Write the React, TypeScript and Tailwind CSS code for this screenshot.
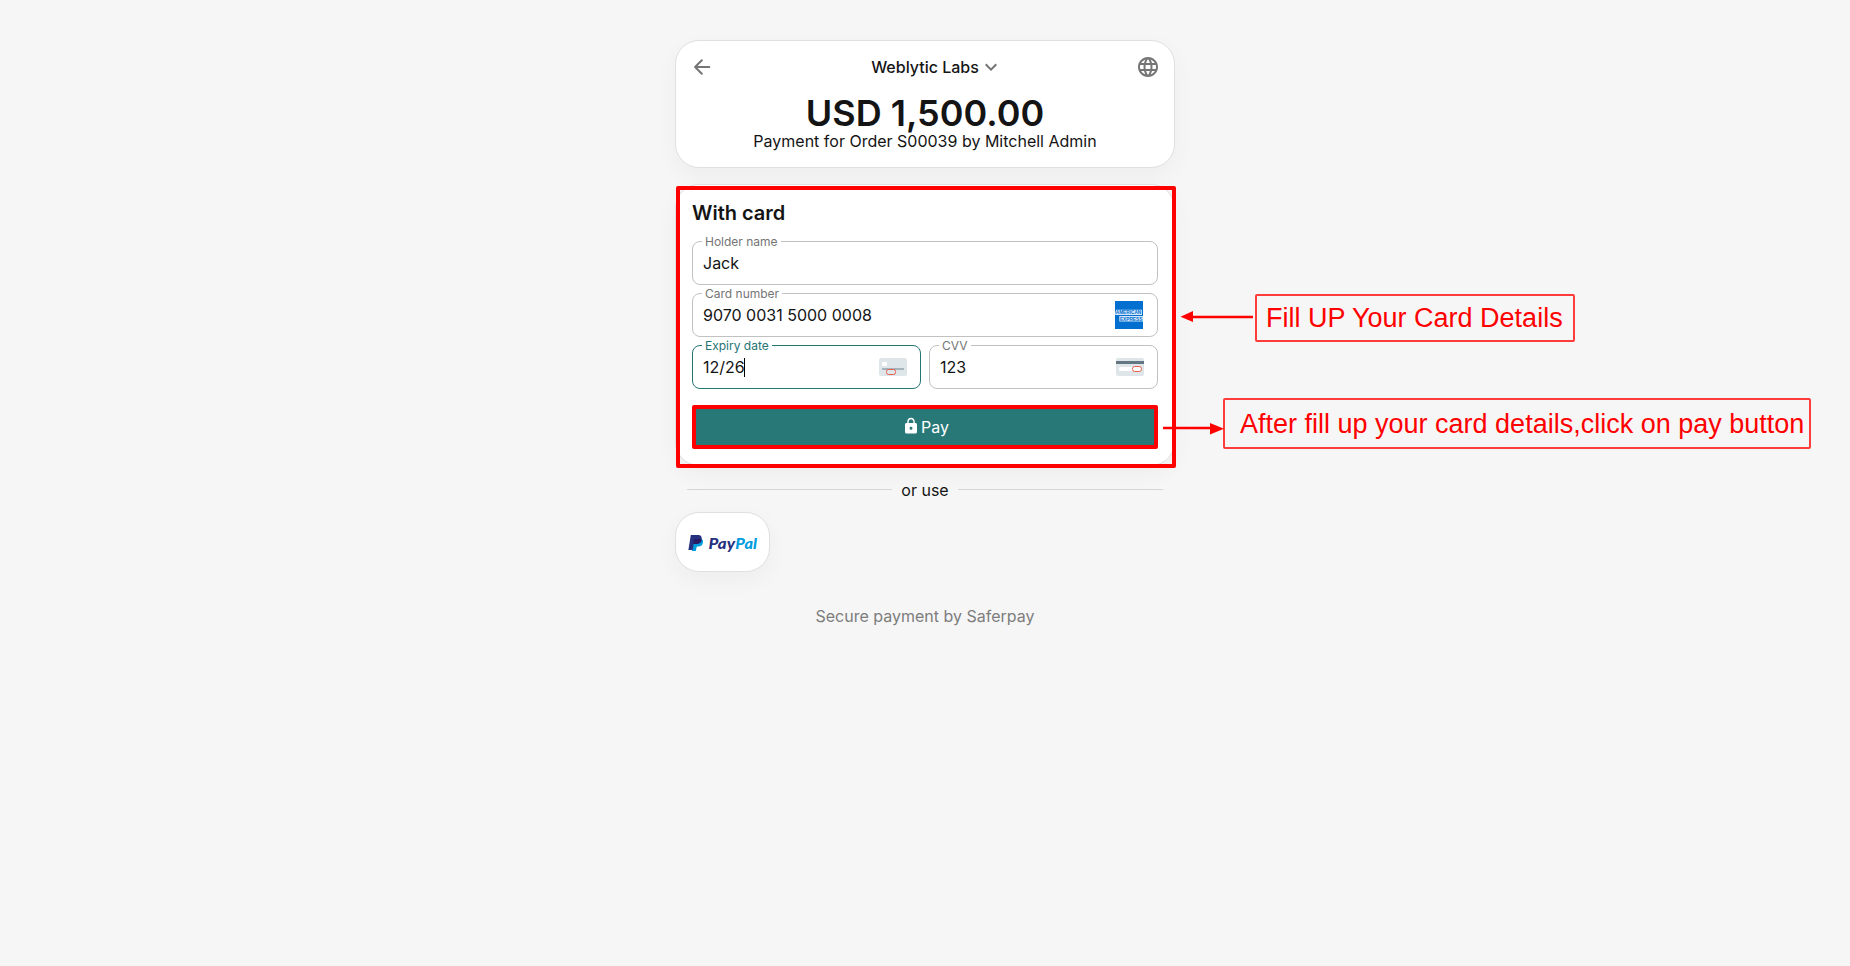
import React from "react";
import { MdKeyboardArrowDown, MdLanguage, MdLock } from "react-icons/md";

const card = "border border-[#e0e0e0] bg-white rounded-[24px] shadow-[0_8px_24px_rgba(0,0,0,0.04)]";

function Field({ label, value, active, children }: { label: string; value: string; active?: boolean; children?: React.ReactNode }) {
  return (
    <fieldset
      className={
        "h-[51px] w-full min-w-0 rounded-[8px] border px-[10px] " +
        (active ? "border-[#267575] text-[#267575]" : "border-[#c1c1c1] text-[#757575]")
      }
    >
      <legend className="-ml-px h-[14px] px-[3px] text-[12px] leading-[16px]">{label}</legend>
      <div className="flex h-[30px] items-center justify-between pr-[3px]">
        <div className="flex items-center text-[16px] leading-[20px] text-[#141414]">
          {value}
          {active && <span className="-ml-px h-[19px] w-px bg-black" />}
        </div>
        {children}
      </div>
    </fieldset>
  );
}

function Amex() {
  return (
    <svg width="28" height="28" viewBox="0 0 28 28" className="mr-px overflow-visible">
      <rect width="28" height="28" fill="#016fd0" />
      <path d="M1 8.7h26v5.4H0zM4.3 15H28v5.4H4.3z" fill="#d5e7f8" />
      <g fill="#016fd0" fontFamily="Liberation Sans" fontWeight="700" fontSize="5.4">
        <text x="0.8" y="13.4" textLength="25.4" lengthAdjust="spacingAndGlyphs">AMERICAN</text>
        <text x="4.9" y="19.7" textLength="22.4" lengthAdjust="spacingAndGlyphs">EXPRESS</text>
      </g>
    </svg>
  );
}

function ExpiryCard() {
  return (
    <svg width="28" height="18" viewBox="0 0 28 18">
      <rect width="28" height="18" rx="2" fill="#dfe6e9" />
      <rect x="3" y="4" width="5" height="4" rx="0.5" fill="#fff" />
      <rect x="3" y="10" width="22" height="2" fill="#a5b4bc" />
      <rect x="7.5" y="11.5" width="9" height="5" rx="2" fill="#dfe6e9" fillOpacity="0.4" stroke="#e8604c" />
    </svg>
  );
}

function CvvCard() {
  return (
    <svg width="28" height="18" viewBox="0 0 28 18">
      <rect width="28" height="18" rx="2" fill="#dfe6e9" />
      <rect y="3" width="28" height="3" fill="#637783" />
      <rect x="3" y="9" width="20" height="4" rx="1.5" fill="#fff" />
      <rect x="16.5" y="8.5" width="9" height="5" rx="2.3" fill="#fff" stroke="#e8604c" />
    </svg>
  );
}

function PayPal() {
  return (
    <svg width="70" height="18" viewBox="0 0 70 18" className="mt-[3px] ml-px">
      <path d="M5 4.1h8.6c1.4.7 1.7 2.1 1.3 3.8-.6 2.5-2.2 3.5-4.5 3.5H8.8L7.8 16H4z" fill="#009cde" />
      <path d="M2.8 0h7.5c2.6 0 3.9 1.7 3.3 4.2-.6 3-2.5 4.6-5.3 4.6H5.6L4.6 15H.4z" fill="#253080" />
      <path d="M6.2 4.1h7.4c.2 2.6-1.4 4.9-5.2 4.9H5.3z" fill="#281a63" />
      <g fontFamily="Lato" fontStyle="italic" fontWeight="900" fontSize="14.4">
        <text x="20.5" y="13.6" textLength="26.5" lengthAdjust="spacingAndGlyphs" fill="#253080">Pay</text>
        <text x="47.3" y="13.6" textLength="21.7" lengthAdjust="spacingAndGlyphs" fill="#009cde">Pal</text>
      </g>
    </svg>
  );
}

export default function App() {
  return (
    <div className="relative h-[966px] w-[1850px] overflow-hidden bg-[#f6f6f6] font-['Inter',sans-serif] text-[#141414]">
      <main className="mx-auto flex w-[500px] flex-col pt-10">
        <header className={card + " flex h-[128px] flex-col px-[14px] pt-[14px]"}>
          <div className="flex h-6 items-center justify-between text-[#757575]">
            <svg width="24" height="24" viewBox="0 0 24 24" fill="none" stroke="currentColor" strokeWidth="2" strokeLinecap="round" strokeLinejoin="round">
              <path d="M19.3 12H5.4M11.8 5.3L5.1 12l6.7 6.7" />
            </svg>
            <div className="flex items-center pl-[24px] text-[16px] font-medium text-[#141414]">
              Weblytic Labs
              <MdKeyboardArrowDown size={24} className="text-[#757575]" />
            </div>
            <MdLanguage size={24} />
          </div>
          <h1 className="mt-[16px] text-center text-[36px] leading-[36px] font-semibold">USD 1,500.00</h1>
          <p className="text-center text-[16px] leading-[20px]">Payment for Order S00039 by Mitchell Admin</p>
        </header>

        <section className={card + " mt-4 h-[282px] px-4 pt-[16px]"}>
          <h2 className="text-[20px] leading-6 font-semibold">With card</h2>
          <div className="mt-[9px] flex flex-col gap-px">
            <Field label="Holder name" value="Jack" />
            <Field label="Card number" value="9070 0031 5000 0008"><Amex /></Field>
            <div className="flex gap-2">
              <Field label="Expiry date" value="12/26" active><ExpiryCard /></Field>
              <Field label="CVV" value="123"><CvvCard /></Field>
            </div>
          </div>
          <button className="mt-4 flex h-[44px] w-full items-center justify-center gap-[2px] rounded-[2px] border-4 border-[#ff0000] bg-[#287878] text-[16px] text-white">
            <MdLock size={18} className="-mt-[3px] -mr-px ml-px" />
            Pay
          </button>
        </section>

        <div className="mt-3 flex h-[23px] items-center gap-[9px] px-3 text-[16px]">
          <span className="h-px flex-1 bg-[#d6d6d6]" />
          or use
          <span className="h-px flex-1 bg-[#d6d6d6]" />
        </div>
        <div className={card + " mt-[11px] flex h-[60px] w-[95px] items-center justify-center"}>
          <PayPal />
        </div>
        <p className="mt-8 text-center text-[16px] leading-6 text-[#7d7d7d]">Secure payment by Saferpay</p>
      </main>

      <div className="absolute top-[186px] left-[676px] h-[282px] w-[500px] rounded-[2px] border-4 border-[#ff0000]" />
      <div className="absolute top-[294px] left-[1255px] flex h-[48px] w-[320px] items-center rounded-[2px] border-2 border-[#ff3c3c] pl-[9px] font-['Liberation_Sans',sans-serif] text-[27px] whitespace-nowrap text-[#ff0000]">
        Fill UP Your Card Details
      </div>
      <div className="absolute top-[398px] left-[1223px] flex h-[51px] w-[588px] items-center rounded-[2px] border-2 border-[#ff3c3c] pt-[2px] pl-[15px] font-['Liberation_Sans',sans-serif] text-[27px] whitespace-nowrap text-[#ff0000]">
        After fill up your card details,click on pay button
      </div>
      <svg className="absolute top-[310px] left-[1180px]" width="76" height="14" viewBox="0 0 76 14">
        <path d="M12 7H73" stroke="#ff0000" strokeWidth="2.4" />
        <path d="M0.5 6.7L13 1v11z" fill="#ff0000" />
      </svg>
      <svg className="absolute top-[421px] left-[1162px]" width="64" height="16" viewBox="0 0 64 16">
        <path d="M1 7H50" stroke="#ff0000" strokeWidth="2.4" />
        <path d="M62 7.7L48 2v11.4z" fill="#ff0000" />
      </svg>
    </div>
  );
}
